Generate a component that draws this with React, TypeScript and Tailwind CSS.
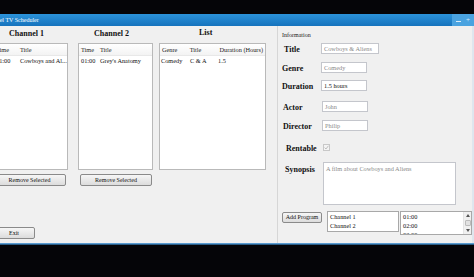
import React from "react";

const serif = { fontFamily: '"Liberation Serif", "Times New Roman", serif' };

function ListHeader({ cols }: { cols: { label: string; w: string }[] }) {
  return (
    <div className="flex h-[12px] items-center border-b border-[#e8e8e8] bg-gradient-to-b from-white to-[#f3f3f3] pl-[2px] text-[6.3px] text-[#222]">
      {cols.map((c) => (
        <span key={c.label} className={`${c.w} whitespace-nowrap`}>
          {c.label}
        </span>
      ))}
    </div>
  );
}

function Btn({ label, className }: { label: string; className: string }) {
  return (
    <div
      className={`flex items-center justify-center rounded-[2px] border border-[#8a8a8a] bg-gradient-to-b from-[#f6f6f6] to-[#dcdcdc] text-[6px] text-[#111] ${className}`}
    >
      {label}
    </div>
  );
}

function Field({ label, value, lpad, w, dark, mt }: { label: string; value: string; lpad: string; w: string; dark?: boolean; mt: string }) {
  return (
    <div className={`flex h-[11px] items-center ${mt}`}>
      <span className={`w-[39px] pt-[3px] text-[8px] font-bold text-[#111] ${lpad}`}>{label}</span>
      <div className={`flex h-full items-center border border-[#c4c6cc] bg-white pl-[2px] text-[6.3px] ${w} ${dark ? "text-[#111]" : "text-[#8a8a8a]"}`}>
        {value}
      </div>
    </div>
  );
}

export default function App() {
  return (
    <div className="h-[277px] w-[474px] overflow-hidden bg-[#050508]" style={serif}>
      <div className="h-[14px]" />
      <div className="-ml-[10px] w-[484px]">
        {/* title bar */}
        <div className="flex h-[12px] items-center bg-gradient-to-b from-[#2b93da] to-[#1673bd] text-[6px] text-white">
          <span className="ml-[-6px] whitespace-nowrap">Channel TV Scheduler</span>
          <div className="ml-auto flex h-full w-[22px] items-center bg-[#4aa3e0]">
            <span className="ml-[4px] mt-[2px] h-[1px] w-[5px] bg-white/80" />
            <span className="ml-[5px] text-[7px] leading-none text-white/80">+</span>
          </div>
        </div>

        {/* body */}
        <div className="flex h-[217px] border-r-2 border-[#dfe6ee] bg-[#f0f0f0]">
          {/* left */}
          <div className="flex w-[287px] flex-col pl-[3px]">
            <div className="flex">
              <div className="flex w-[75px] flex-col">
                <div className="flex h-[16px] items-center pl-[16px] text-[8px] font-bold text-[#111]">Channel 1</div>
                <div className="mt-[1px] h-[127px] border border-[#b9b9b9] bg-white">
                  <ListHeader cols={[{ label: "Time", w: "w-[24px]" }, { label: "Title", w: "w-[40px]" }]} />
                  <div className="flex h-[10px] items-center pl-[2px] text-[6.3px] text-[#111]">
                    <span className="w-[24px]">01:00</span>
                    <span className="whitespace-nowrap">Cowboys and Al...</span>
                  </div>
                </div>
              </div>
              <div className="ml-[10px] flex w-[75px] flex-col">
                <div className="flex h-[16px] items-center pl-[16px] text-[8px] font-bold text-[#111]">Channel 2</div>
                <div className="mt-[1px] h-[127px] border border-[#b9b9b9] bg-white">
                  <ListHeader cols={[{ label: "Time", w: "w-[19px]" }, { label: "Title", w: "w-[40px]" }]} />
                  <div className="flex h-[10px] items-center pl-[2px] text-[6.3px] text-[#111]">
                    <span className="w-[19px]">01:00</span>
                    <span className="whitespace-nowrap">Grey's Anatomy</span>
                  </div>
                </div>
              </div>
              <div className="ml-[6px] flex w-[107px] flex-col">
                <div className="flex h-[16px] items-center pb-[3px] pl-[40px] text-[8px] font-bold text-[#111]">List</div>
                <div className="mt-[1px] h-[127px] border border-[#b9b9b9] bg-white">
                  <ListHeader
                    cols={[
                      { label: "Genre", w: "w-[28px]" },
                      { label: "Title", w: "w-[30px]" },
                      { label: "Duration (Hours)", w: "w-[46px]" },
                    ]}
                  />
                  <div className="flex h-[10px] items-center pl-[1px] text-[6.3px] text-[#111]">
                    <span className="w-[29px]">Comedy</span>
                    <span className="w-[28px]">C &amp; A</span>
                    <span>1.5</span>
                  </div>
                </div>
              </div>
            </div>
            <div className="mt-[4px] flex">
              <Btn label="Remove Selected" className="h-[12px] w-[73px]" />
              <Btn label="Remove Selected" className="ml-[14px] h-[12px] w-[72px]" />
            </div>
            <Btn label="Exit" className="mt-[41px] h-[12px] w-[42px]" />
          </div>

          {/* right group */}
          <div className="flex flex-1 flex-col border-l border-[#d6d6d6] pl-[4px]">
            <div className="mt-[5px] flex h-[8px] items-center text-[6px] text-[#222]">Information</div>
            <Field label="Title" value="Cowboys & Aliens" lpad="pl-[2px]" w="w-[58px]" mt="mt-[4px]" />
            <Field label="Genre" value="Comedy" lpad="" w="w-[46px]" mt="mt-[8px]" />
            <Field label="Duration" value="1.5 hours" lpad="" w="w-[46px]" dark mt="mt-[7px]" />
            <Field label="Actor" value="John" lpad="pl-[1px]" w="w-[46px] ml-[1px]" mt="mt-[10px]" />
            <Field label="Director" value="Philip" lpad="pl-[1px]" w="w-[46px] ml-[1px]" mt="mt-[8px]" />
            <div className="mt-[11px] flex h-[11px] items-center">
              <span className="w-[41px] pl-[4px] pt-[2px] text-[8px] font-bold text-[#111]">Rentable</span>
              <div className="flex h-[7px] w-[7px] items-center justify-center border border-[#c8c8c8] bg-[#f4f4f4]">
                <svg width="5" height="5" viewBox="0 0 5 5">
                  <path d="M0.6 2.6 L2 4 L4.4 0.8" fill="none" stroke="#b0b0b0" strokeWidth="0.8" />
                </svg>
              </div>
            </div>
            <div className="mt-[9px] flex h-[43px]">
              <span className="mt-[2px] w-[41px] pl-[3px] text-[8px] font-bold text-[#111]">Synopsis</span>
              <div className="w-[133px] border border-[#c4c6cc] bg-white pl-[2px] pt-[2px] text-[6.3px] leading-[8px] text-[#8a8a8a]">
                A film about Cowboys and Aliens
              </div>
            </div>
            <div className="mt-[6px] flex items-start">
              <Btn label="Add Program" className="mt-[1px] h-[11px] w-[40px]" />
              <div className="ml-[5px] h-[21px] w-[72px] border border-[#a8a8a8] bg-white pl-[2px] text-[6.3px] leading-[9px] text-[#111]">
                <div>Channel 1</div>
                <div>Channel 2</div>
              </div>
              <div className="ml-[1px] flex h-[24px] flex-1 border border-[#a8a8a8] bg-white">
                <div className="h-full flex-1 overflow-hidden pl-[2px] text-[6.3px] leading-[9px] text-[#111]">
                  <div>01:00</div>
                  <div>02:00</div>
                  <div>03:00</div>
                </div>
                <div className="flex w-[8px] flex-col items-center justify-between border-l border-[#e4e4e4] bg-[#f0f0f0] py-[2px]">
                  <svg width="4" height="3" viewBox="0 0 4 3">
                    <path d="M0 3 L2 0 L4 3 Z" fill="#555" />
                  </svg>
                  <div className="h-[6px] w-[6px] rounded-[1px] border border-[#bcbcbc] bg-[#e2e2e2]" />
                  <svg width="4" height="3" viewBox="0 0 4 3">
                    <path d="M0 0 L4 0 L2 3 Z" fill="#555" />
                  </svg>
                </div>
              </div>
            </div>
          </div>
        </div>
        <div className="h-[2px] border-t border-[#5a9bd0] bg-[#2a5e88]" />
      </div>
    </div>
  );
}
